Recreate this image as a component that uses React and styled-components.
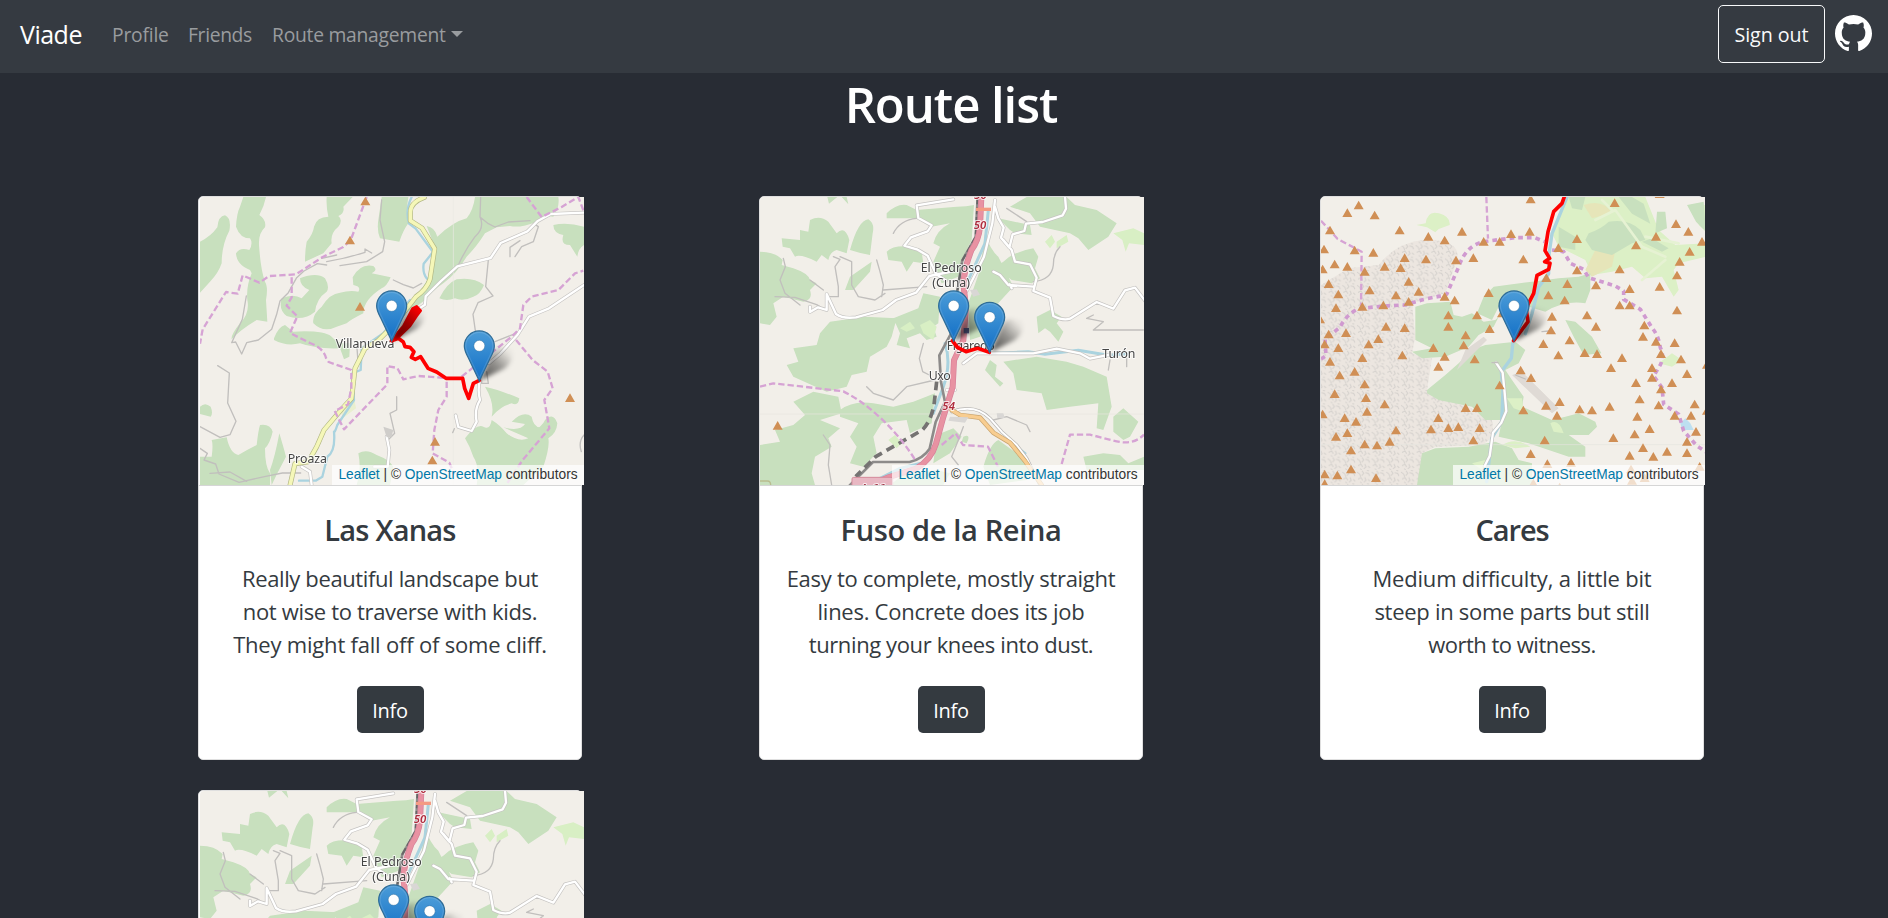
import React from "react";
import styled, { createGlobalStyle } from "styled-components";

const GlobalStyle = createGlobalStyle`
  *, *::before, *::after { box-sizing: border-box; }
  html, body { margin: 0; height: 100%; overflow: hidden; }
  body {
    background: #282c34;
    color: #343a40;
    font-family: "Open Sans", "Noto Sans", sans-serif;
    font-size: 20px;
    line-height: 1.5;
  }
  a { text-decoration: none; }
`;

/* ---------- navigation ---------- */

const Navbar = styled.nav`
  display: flex;
  align-items: center;
  height: 73px;
  padding: 5px 16px 10px 20px;
  background: #353a41;
`;

const Brand = styled.a`
  margin-right: 20px;
  padding-top: 1px;
  width: 72px;
  color: #fff;
  font-size: 25px;
  letter-spacing: -0.5px;
`;

const NavLinks = styled.div`
  display: flex;
  gap: 20px;
  padding-top: 2px;
`;

const NavLink = styled.a`
  display: flex;
  align-items: center;
  width: ${({ $width }) => $width}px;
  color: #999c9f;
  font-size: 19.3px;
  white-space: nowrap;
  letter-spacing: ${({ $spacing }) => $spacing || 0}px;
`;

const Caret = styled.span`
  margin: -3px 0 0 5px;
  border-top: 6px solid currentColor;
  border-left: 6px solid transparent;
  border-right: 6px solid transparent;
`;

const SignOut = styled.button`
  width: 107px;
  height: 58px;
  margin: 0 10px 0 auto;
  padding: 2px 0 0;
  border: 1px solid #f8f9fa;
  border-radius: 5px;
  background: transparent;
  color: #f8f9fa;
  font: inherit;
  font-size: 19.7px;
  letter-spacing: -0.05px;
`;

const GithubMark = styled.svg`
  width: 37px;
  height: 37px;
  margin-top: -1px;
  fill: #fff;
`;

/* ---------- page and cards ---------- */

const Heading = styled.h1`
  height: 123px;
  margin: 0;
  padding: 1px 0 0 14px;
  color: #fff;
  font-size: 49px;
  font-weight: 600;
  line-height: 60px;
  text-align: center;
  letter-spacing: -1.05px;
`;

const RouteGrid = styled.main`
  display: grid;
  grid-template-columns: repeat(3, 384px);
  gap: 30px 177px;
  padding-left: 198px;
`;

const Card = styled.article`
  height: 564px;
  border: 1px solid #dfdfdf;
  border-radius: 5px;
  background: #fff;
`;

const MapFrame = styled.div`
  display: grid;
  width: 384px;
  height: 288px;
  margin-left: ${({ $inset }) => $inset}px;
  border-top-left-radius: 4px;
  overflow: hidden;
`;

const MapCanvas = styled.svg`
  grid-area: 1 / 1;
  width: 384px;
  height: 288px;
`;

const Attribution = styled.div`
  grid-area: 1 / 1;
  place-self: end;
  z-index: 1;
  width: 252px;
  height: 20px;
  background: rgba(255, 255, 255, 0.7);
  color: #333;
  font: 13.75px/19px "Liberation Sans", Arial, sans-serif;
  text-align: center;
  white-space: nowrap;
  a { color: #0078a8; }
`;

const CardBody = styled.div`
  display: flex;
  flex-direction: column;
  align-items: center;
  padding-top: 26px;
  border-top: 1px solid #d6d6d6;
`;

const Title = styled.h2`
  margin: 0 0 14px;
  font-size: 29px;
  font-weight: 600;
  line-height: 36px;
  letter-spacing: ${({ $spacing }) => $spacing}px;
`;

const Description = styled.p`
  margin: 0 0 25px;
  font-size: 22px;
  line-height: 33px;
  text-align: center;
  white-space: nowrap;
`;

const Line = styled.span`
  display: block;
  letter-spacing: ${({ $spacing }) => $spacing}px;
`;

const InfoButton = styled.button`
  width: 67px;
  height: 47px;
  padding: 3px 0 0;
  border: 0;
  border-radius: 5px;
  background: #343a40;
  color: #fff;
  font: inherit;
  letter-spacing: -0.3px;
`;

/* ---------- map drawing ---------- */

const Wood = styled.path`fill: ${({ $tone }) => $tone || "#c8e0be"};`;

const Stroke = styled.path`
  fill: none;
  stroke: ${({ $color }) => $color};
  stroke-width: ${({ $w }) => $w};
  stroke-linejoin: round;
  stroke-linecap: ${({ $dash }) => ($dash ? "butt" : "round")};
  stroke-dasharray: ${({ $dash }) => $dash || "none"};
`;

const PlaceName = styled.text`
  font-family: "Noto Sans", "Open Sans", sans-serif;
  font-size: ${({ $size }) => $size || 37}px;
  font-style: ${({ $italic }) => ($italic ? "italic" : "normal")};
  font-weight: ${({ $italic }) => ($italic ? 600 : 400)};
  fill: ${({ $color }) => $color || "#444"};
  stroke: rgba(255, 255, 255, 0.75);
  stroke-width: 6px;
  stroke-linejoin: round;
  paint-order: stroke;
`;

const Cased = ({ d, w, color, casing }) => (
  <>
    <Stroke d={d} $color={casing} $w={w + 4} />
    <Stroke d={d} $color={color} $w={w} />
  </>
);

const WhiteRoad = ({ d, w = 7 }) => <Cased d={d} w={w} color="#fff" casing="#c6c4c2" />;
const Track = ({ d }) => <Stroke d={d} $color="#c1bfbd" $w={4} />;
const Stream = ({ d, w = 7 }) => <Stroke d={d} $color="#aad3df" $w={w} />;
const Border = ({ d }) => <Stroke d={d} $color="#d6a3d4" $w={7} $dash="19 9" />;
const Trail = ({ d }) => <Stroke d={d} $color="#ff0000" $w={11} />;

const Peaks = ({ points }) => (
  <path
    fill="#d08f55"
    d={points.map(([x, y]) => `M${x} ${y - 14}l15 26h-30z`).join("")}
  />
);

const PIN =
  "M12.5.5C5.9.5.5 5.9.5 12.5c0 3.4 1.4 6 3 9.1l9 18.9 9-18.9c1.6-3.1 3-5.7 3-9.1C24.5 5.9 19.1.5 12.5.5z";

const MapDefs = ({ id }) => (
  <defs>
    <linearGradient id={`${id}-pin`} x1="0" y1="0" x2="0" y2="1">
      <stop offset="0" stopColor="#4b9cd8" />
      <stop offset="1" stopColor="#126fc6" />
    </linearGradient>
    <linearGradient id={`${id}-shade`} x1="0" y1="1" x2="1" y2="0">
      <stop offset="0" stopColor="#000" stopOpacity=".7" />
      <stop offset=".5" stopColor="#000" stopOpacity=".38" />
      <stop offset=".85" stopColor="#000" stopOpacity=".04" />
    </linearGradient>
    <filter id={`${id}-blur`} x="-40%" y="-40%" width="180%" height="180%">
      <feGaussianBlur stdDeviation="6" />
    </filter>
    <filter id={`${id}-soft`} x="-5%" y="-5%" width="110%" height="110%">
      <feGaussianBlur stdDeviation="0.8" />
    </filter>
    <pattern id={`${id}-scree`} width="44" height="40" patternUnits="userSpaceOnUse">
      <path
        d="M3 6l8 6 3 9M18 2l5 8-6 7M28 8l9 2 4 8M6 27l9-4 5 8M26 22l4 9-7 6M36 28l6 6M12 36l5 3M33 1l6 2"
        fill="none" stroke="#d3d0cc" strokeWidth="3"
      />
    </pattern>
  </defs>
);

const PinShadow = ({ id, x, y }) => (
  <path
    filter={`url(#${id}-blur)`}
    fill={`url(#${id}-shade)`}
    d={`M${x + 3} ${y}L${x + 38} ${y - 85}Q${x + 60} ${y - 110} ${x + 95} ${y - 92}Q${x + 110} ${y - 62} ${x + 75} ${y - 35}L${x + 3} ${y}z`}
  />
);

const Pin = ({ id, x, y }) => (
  <g transform={`translate(${x - 46.9} ${y - 152}) scale(3.75)`}>
    <path d={PIN} fill={`url(#${id}-pin)`} stroke="#2e6c97" strokeWidth="1" />
    <path d="M12.5 1.6C6.5 1.6 1.6 6.5 1.6 12.5c0 3 1.3 5.6 2.8 8.6l8.1 17 8.1-17c1.5-3 2.8-5.6 2.8-8.6 0-6-4.9-10.9-10.9-10.9z" fill="none" stroke="#fff" strokeOpacity=".12" />
    <circle cx="12.5" cy="12.4" r="4.4" fill="#fff" stroke="#2e6c97" strokeOpacity=".6" strokeWidth=".6" />
  </g>
);

const XanasMap = ({ id }) => (
  <MapCanvas viewBox="30 21 1152 864">
    <MapDefs id={id} />
    <rect x="30" y="21" width="1152" height="864" fill="#f2efe9" />
    <g filter={`url(#${id}-soft)`}>
      <Wood d="M30 155Q62 140 82 112Q85 78 105 76Q125 85 118 122Q95 165 95 220Q85 250 60 275L30 308z
        M160 21L228 21Q222 50 208 75Q230 90 225 112Q205 130 207 165Q212 240 225 275Q235 290 228 330L232 395L200 390Q150 420 125 448Q122 435 150 400Q180 370 172 330Q168 290 185 250L180 240Q140 225 138 190Q150 170 178 180Q190 160 180 145Q150 145 138 110Q140 70 150 50z
        M410 21L488 21L460 50Q465 70 445 78Q460 90 445 110Q420 130 425 160L400 190L345 215Q345 180 350 155Q370 130 372 110Q380 80 415 80Q408 50 410 21z
        M575 21L655 21Q648 60 655 100Q640 120 628 155L570 145Q560 120 565 90z
        M710 108Q735 112 742 140Q790 95 830 85Q850 60 855 21L1105 21Q1110 50 1090 80Q1060 75 1040 95Q990 115 960 108L920 112L885 130Q860 170 830 200Q800 250 760 280Q730 300 705 330L660 365L650 345Q690 310 712 270L738 180z
        M1090 105Q1130 95 1182 110L1182 165Q1165 175 1162 200L1140 165Q1110 165 1120 135Q1090 130 1090 105z
        M748 325Q770 280 800 268Q850 260 882 285Q870 315 850 320Q820 335 795 325Q770 335 748 325z
        M488 262Q510 220 550 228Q565 240 545 250L602 262Q590 290 575 295Q520 330 520 370Q480 390 470 400L440 410Q400 430 370 400Q365 375 395 350Q420 310 450 308Q480 300 505 305Q515 290 490 285z
        M330 265Q380 245 405 265Q420 290 410 305Q380 325 375 365Q340 395 290 378Q265 360 275 325Q310 310 335 325L358 300Q330 290 330 265z
        M252 445Q265 410 285 405L310 425Q400 420 425 440Q440 460 480 460L478 500L462 508L450 475Q380 478 330 460Q290 470 252 450z
        M30 800L65 800Q70 765 65 750L110 742Q120 790 145 795Q170 780 200 765Q205 720 210 705Q240 700 248 725Q240 760 225 775Q225 830 240 850L240 885L30 885z
        M30 650Q45 635 62 650Q70 670 62 680L30 672z
        M268 730Q280 770 288 800L262 850L245 885L240 840Q255 800 268 730z
        M505 790Q530 775 560 795Q600 810 610 830L600 885L500 885Q515 840 505 790z
        M885 590Q930 600 988 625Q985 650 965 640Q930 650 905 680Q915 640 885 590z
        M825 745Q860 700 880 710Q900 722 905 690Q930 705 950 730Q985 758 1015 745L940 712Q990 725 1005 702L965 695Q1000 660 1025 680Q1030 710 1050 712L1020 735Q1060 705 1065 690Q1090 665 1102 700Q1100 730 1075 745Q1080 770 1060 830L1000 885L860 885Q870 830 850 800Q840 770 825 745z" />
      <Wood $tone="#e9efcf" d="M490 610l8 45-40 30-8-30z" />
      <Stroke d="M790 21V885" $color="#ece9e4" $w={2} />
      <Track d="M575 30l-5 60 14 65-6 30-48 30-80 12M410 215q60-10 115-28l0-10 20 12M395 205l45-10M410 225l-28-4-40 22-22 20-25 45-25 25-10 40-15 45-40 32-35 8-15 34-18-36-12 2 32-70 12-70" />
      <Track d="M30 775l22 15-10 20 35 12 10 30 60 25 80-18 50-10 55 0M30 710l60 32 30-8 18-40-25-55 5-90-35-22M60 850l60-4 50 28M620 620l0 40-20 10 14 60-20 20" />
      <Track d="M872 21l-2 60 25 20 20 10 40-15 65-4M870 80q15 35-15 60-30 40-50 85M895 210l-8 80 22 28-45 20-15 35 10 70-8 60M610 270l30 14 30 10 25-14M1030 100l15 10-15 45-35 15-20 30M960 200v-28l30-20M1182 735q-18 20-8 50M500 460l4 55" />
      <Stream d="M665 21q-20 40-8 80l20 15 52 70-28 35q-4 30 10 45M660 330l-80 100-65 45-3 65-25 10 5 80-50 75q-8 25-10 20 5 60-20 75l-15 60-20 12h-50" />
      <WhiteRoad d="M1182 68l-100 4-40 22-30 30-80 35-30 45-100 25-50 45-45 45-2 25-15 10M1182 285l-60 40-45 30-60 25-35 55-50 55-35 30M335 830l25 15 5 40M870 570q-8 30 0 60-18 30-10 65l-15 28-40-12-8-35M590 740l8 40-5 50-40 0" w={7} />
      <Track d="M915 455l55-22M890 545l5 35h-20v-28M788 728l5-12" />
      <path d="M580 710l30 10-6 22h-14z" fill="#cfcdca" />
      <Cased d="M703 22q-42 15-42 45v25l35 22 38 62-14 92q-10 30-42 52l-60 78-55 55-38 22-30 60-10 90-28 30-55 65-22 50-25 45-40 6-15 65" w={11} color="#f5f7b8" casing="#b3b884" />
      <Border d="M530 21l-48 130-22 20-62 30-80 52-80 5-30 20-50-22-15 55-35-5-70 112-8 43M305 262v60l-15 25 32 32-22 50 60 30q40 15 48 45l8 12 68 24v55l-10 48-40 20 28 55 130-135v-55l30 6 18 34 45-10 85 6M770 575v45l-25 40-12 60-5 70 50 28 15 35M815 560l150-120 25-25 10-70 25-25 80-20 50-50 25-8M978 450l50 60 45 35 15 50-25 35 15 85-80 95-60 90M1010 21l45 60 60-30 50-30 17 45" />
      <Peaks points={[[526, 34], [480, 151], [510, 350], [735, 755], [727, 811], [1140, 624]]} />
      <PlaceName x="437" y="474" textLength="176">Villanueva</PlaceName>
      <PlaceName x="293" y="819" textLength="118">Proaza</PlaceName>
    </g>
    <path d="M603 452L640 408L668 355L680 349L692 362L680 378L660 408L625 442z" fill="#f00" stroke="#f00" strokeWidth="8" strokeLinejoin="round" />
    <Trail d="M605 452L625 445L640 456L645 470L660 472L672 485L664 502L676 508L692 500L714 535L740 546L768 565L818 565L824 595L836 625L850 580L868 571" />
    <PinShadow id={id} x={605} y={452} />
    <PinShadow id={id} x={868} y={571} />
    <Pin id={id} x={605} y={453} />
    <Pin id={id} x={868} y={573} />
  </MapCanvas>
);

const FusoMap = ({ id }) => (
  <MapCanvas viewBox="30 21 1152 864">
    <MapDefs id={id} />
    <rect x="30" y="21" width="1152" height="864" fill="#f2efe9" />
    <g filter={`url(#${id}-soft)`}>
      <Wood d="M232 21h30l-25 20zM275 21l20 22-5-22z
        M95 145L150 150L150 120L175 125L180 90Q210 75 235 95L260 130Q285 105 298 150L290 190L260 180Q240 185 235 210L215 195L200 215Q150 190 135 200L120 175L98 170z
        M300 180Q325 90 355 88Q375 100 368 130L360 195Q330 190 300 180z
        M410 70Q440 40 470 45L500 60L620 50Q650 50 672 45L665 150L640 200L625 260L575 280L550 215L570 170L550 160Q560 120 600 100L545 110L500 85L410 85z
        M410 185Q430 165 480 170L515 185L520 220L490 215L470 245L455 215L415 210z
        M30 185Q75 185 98 210L95 225L130 235Q175 250 180 270L200 280L180 300Q190 330 160 335L100 320L70 340L80 380L60 405L30 400z
        M300 260L365 215L360 245L310 300L285 300z
        M830 21L950 21L975 45L1040 60L1100 100L1075 140L1015 180L985 145L960 130L870 110L840 70L780 50z
        M705 130Q720 180 745 200L790 290L735 350L690 440L660 450L655 340L690 240z
        M745 85L840 105L845 135L795 130L780 120z
        M760 215Q790 185 850 175L865 200L855 235L870 265L845 280L785 270L735 230z
        M110 525L145 515L130 475L200 465L210 430L240 395L345 380L440 385L425 440L410 470L360 500L350 545L305 555L290 590L230 605L130 560z
        M430 385L505 355L520 310L570 320L565 400L550 410L560 440L530 450L510 430L470 445L480 475L440 465L450 430z
        M130 635L190 605L265 620L275 670L210 690L270 715L235 745L245 770L195 800L185 850L195 885L110 885L90 850L30 840L30 765L90 755L75 720L130 705L165 675z
        M270 660Q310 630 370 640L430 650L490 635L555 610L545 700L480 730L470 690L395 700L370 740L380 790L340 830L300 820L320 770L300 740L325 700L270 680z
        M30 840l60-10 70 55H30z
        M560 735L610 715L635 740L600 790L550 820zM640 740Q665 730 650 760L635 755z
        M705 540L720 510L740 525L735 560L760 580L750 590z
        M760 515L860 500L950 515L1000 530L1070 560L1085 650L1060 720L1040 715L1045 640L960 650L890 660L875 610L800 600L790 550z
        M860 380L900 360L935 380L920 400L940 425L925 455L900 425L885 415L865 430z
        M1090 680L1120 655L1165 695L1140 740L1120 750L1090 725z
        M1000 800L1060 790L1110 795L1135 820L1182 800L1182 840L1010 840z
        M700 830Q720 760 745 750L800 790L850 840L830 870L720 885z
        M420 885L465 850L560 840L600 850L580 885z" />
      <Wood $tone="#d8efc4" d="M885 155l20-20 10 20-15 20zM920 155l30-20 5 20-35 20zM1090 130l60-15 32 15v35l-45-5-10 25-10-35zM510 405l30-15 20 20-10 40-30-20zM450 415l30-20 15 20-25 10zM415 750l20-15 20 25-15 15z" />
      <Stroke d="M30 672H1182" $color="#e9e6e0" $w={2} />
      <Track d="M100 205l6 25-16 40 15 40 45 35M75 320l60 2 65 22 10 6M250 200l20 8-15 22 10 60 0 30-30 0M270 200l35 15 0 70 20 35 50 10 30-20M380 210l10 35 10 40-5 35M430 130q20-40 70-45M400 300l130-10M180 270l40 30M520 460l-12 45 10 40 20 10M350 590l20 20 60 20 40-40 85-20M220 735l20 30-5 60 10 60M930 170q-20 20-20 55-5 45-60 50M770 55l60 40M1030 375l-20 10 50 10-30 25 150 0M640 710l-15 40-20 50 20 25M730 690l40-10 60 25 10 20M1080 510l-5 30M1130 505l0 25" />
      <Stream d="M715 60l-10 100-50 110M585 460q20 60-5 130l-30 80M735 490l100-5 50 8 100-12 90 15 55-5M390 865l60-30 60-15M785 760l40 30" w={9} />
      <WhiteRoad d="M180 350l0 16 24-14 26 8 0-48 28 60q20 15 60 10l80-22 40-30 60-22 40-50 60-12M610 28l-110 18 5 38 40 22-12 18-50 18-20 25 40 12 30 18 25 55 30 20M735 30l-8 70-25 100-50 100-35 40 0 90M735 50l10 35 16 28-8 30 25 30 10-40 35-10 5-22 50-5 60-20 10-20-5-60M760 150l25 30 10 35 45 8 20 40-10 40 50 20 10 55q30 15 50 8l80-50 50 20 35-55 30-8 32 42M730 245l20 10 25 30 75 5M785 295l-6-12M640 520l40-30 170 0 70-14 70 14 30 16 60-12M590 600l25 0" w={7} />
      <Cased d="M605 665q70-25 115 20l35 40 45 40 30 40 40 80" w={6} color="#fff" casing="#b7b5b3" />
      <Stroke d="M683 21l-6 120-40 70-18 110-16 110-35 65 5 80 12 60-28 60-18 80q-20 30-60 40l-110 0-70 70" $color="#8d8b8a" $w={8} />
      <Stroke d="M683 21l-6 120-40 70-18 110" $color="#666" $w={6} $dash="22 8" />
      <Stroke d="M560 575l-8 70q-10 50-35 75-70 40-140 80l-60 60" $color="#747372" $w={11} $dash="26 16" />
      <Cased d="M605 660l25 15 60 8 40 45 50 30 45 55 50 72" w={10} color="#f8cd90" casing="#c9a36d" />
      <Cased d="M694 21l-4 90q-4 40-26 70-20 50-24 100l8 70-8 100-28 60-4 80-28 90-22 80q-15 50-60 75l-80 25-60 25" w={14} color="#e892a2" casing="#d7809a" />
      <path d="M660 300l20-2 10 16-20 6zM600 680l55 2-10 16-50-6zM740 670l20 0 4 14h-22z" fill="#d9d7d5" />
      <path d="M678 53h45v10h-45z" fill="#f49b83" />
      <path d="M641 414h16v16h-16z" fill="#585c8c" />
      <Border d="M30 590l40-10 90 10 120 14q50 25 95 65 70 60 120 140M575 765l42-35 22 35 75 5 30 60M935 822l25-88 60 0 80 20q50 12 82-20" />
      <Peaks points={[[83, 707]]} />
      <rect x="306" y="862" width="122" height="30" rx="5" fill="#e8b8c3" stroke="#d68b9b" strokeWidth="3" />
      <path d="M30 873h22q10 0 10 12" fill="none" stroke="#b9bd90" strokeWidth="4" />
      <PlaceName x="332" y="907" $size={32} $color="#a33446" $italic textLength="72">A-66</PlaceName>
      <PlaceName x="672" y="28" $size={34} $color="#ae2c3c" $italic textLength="38">50</PlaceName>
      <PlaceName x="671" y="118" $size={34} $color="#ae2c3c" $italic textLength="38">50</PlaceName>
      <PlaceName x="577" y="659" $size={34} $color="#ae2c3c" $italic textLength="38">54</PlaceName>
      <PlaceName x="512" y="245" textLength="183">El Pedroso</PlaceName>
      <PlaceName x="547" y="292" textLength="113">(Cuna)</PlaceName>
      <PlaceName x="590" y="481" textLength="144">Figaredo</PlaceName>
      <PlaceName x="536" y="569" textLength="66">Uxo</PlaceName>
      <PlaceName x="1057" y="504" textLength="99">Turón</PlaceName>
    </g>
    <Trail d="M607 452L622 472L648 485L683 475L718 487" />
    <PinShadow id={id} x={611} y={452} />
    <PinShadow id={id} x={719} y={486} />
    <Pin id={id} x={611} y={453} />
    <Pin id={id} x={719} y={487} />
  </MapCanvas>
);

const CARES_PEAKS = [
  [140, 46], [106, 69], [188, 76], [54, 121], [263, 121], [349, 140], [398, 151], [450, 125], [515, 155],
  [563, 155], [597, 132], [653, 125], [656, 28], [908, 39], [1043, 12], [36, 178], [128, 181], [184, 188],
  [278, 204], [342, 208], [432, 211], [484, 204], [634, 208], [739, 174], [795, 147], [972, 166], [1032, 140],
  [1092, 102], [1129, 125], [1170, 155], [1133, 185], [1103, 215], [68, 223], [106, 230], [32, 238], [158, 245],
  [218, 230], [266, 234], [290, 275], [50, 282], [173, 301], [79, 313], [252, 316], [320, 305], [398, 320],
  [428, 331], [530, 309], [703, 264], [766, 282], [795, 241], [852, 286], [923, 238], [1095, 256], [953, 297],
  [1043, 290], [709, 316], [758, 331], [72, 354], [151, 350], [214, 346], [290, 335], [923, 346], [953, 346],
  [1095, 361], [409, 376], [495, 376], [570, 370], [720, 380], [825, 376], [24, 388], [222, 410], [278, 414],
  [409, 410], [533, 417], [717, 421], [852, 410], [997, 406], [50, 433], [102, 429], [461, 436], [199, 447],
  [773, 451], [993, 440], [1032, 455], [1088, 459], [38, 463], [170, 463], [455, 466], [694, 462], [79, 474],
  [364, 474], [271, 496], [398, 500], [488, 508], [739, 496], [818, 489], [855, 492], [1047, 492], [1107, 508],
  [151, 504], [54, 515], [930, 504], [379, 530], [897, 534], [1020, 534], [626, 541], [128, 545], [83, 556],
  [1125, 552], [1185, 524], [657, 564], [1020, 563], [563, 586], [972, 579], [1080, 579], [158, 583], [1047, 598],
  [68, 612], [162, 624], [983, 628], [743, 636], [218, 643], [1148, 643], [702, 647], [1040, 646], [461, 654],
  [495, 654], [634, 661], [803, 658], [840, 661], [893, 650], [165, 665], [1185, 662], [32, 673], [98, 684],
  [379, 684], [735, 677], [976, 680], [1088, 677], [1137, 677], [132, 695], [357, 718], [409, 714], [439, 711],
  [503, 714], [252, 721], [1013, 717], [1152, 725], [106, 729], [968, 733], [72, 740], [904, 744], [484, 751],
  [698, 751], [233, 755], [1125, 755], [158, 763], [195, 766], [993, 774], [117, 781], [1065, 785], [656, 792],
  [953, 797], [1024, 800], [1125, 789], [706, 822], [777, 818], [117, 838], [1163, 830], [38, 853], [76, 856],
  [192, 864], [38, 882], [957, 838], [664, 880], [960, 872], [998, 864], [743, 892],
];

const CaresMap = ({ id }) => {
  const ridge =
    "M27 507l15-10-3-50 45-35q20-40 55-55 70-10 140-12 60-20 110-27l15-5 35-80q25-75 90-80l80-10 60 0 28 12M720 180l35 5 20 35 40 18 15 25 80 25 25 15 0 25 50 30 35 55q20 25 25 60 15 30-5 60l-15 25 25 35 5 50 45 30 15 50 40 45 30 20";
  const scree =
    "M27 285L110 235L200 225Q250 160 330 150Q450 145 435 210L400 310L300 340L310 440L300 490L360 505L345 600L450 640L540 690L545 740L510 765L370 770L330 790L330 885L27 885z";
  return (
    <MapCanvas viewBox="27 21 1152 864">
      <MapDefs id={id} />
      <rect x="27" y="21" width="1152" height="864" fill="#f2efe9" />
      <g filter={`url(#${id}-soft)`}>
        <path d={scree} fill="#ece6e0" />
        <path d={scree} fill={`url(#${id}-scree)`} />
        <Wood $tone="#dcf0c6" d="M313 105l28-5q5-40 40-30 35 10 32 35l-33 12-10 10-25-15z
          M770 21L1000 21L1040 120L1090 165L1182 160L1182 200L1100 220L1085 240L1100 300L1085 320L1050 260L1000 265L960 230L900 245L840 255L820 210L740 170L720 130Q735 70 770 21z
          M1170 45l12 0 0 80-22-20zM1040 520l40-30 30 20-30 20z" />
        <path d="M815 45q60-20 85 25l-60 15zM850 180l60 0-10 50-60 30-20-20z" fill="#e6e5b9" />
        <Wood d="M830 130Q870 115 890 95Q950 85 985 120L1000 150L960 160L900 195L840 180L820 150z
          M770 21L820 21L810 60L780 55zM960 21l35 20 20 60-55-30-40-50zM1035 65l25 0 5 50-35 15zM1125 45l50-10 7 90-30-30zM990 155l60 30 20-10-50-30zM740 110l50 30 0 40-50-10z
          M545 290L660 275L740 265L800 260L835 250L835 300L820 340Q760 330 700 365L650 350L600 380L560 350L540 390L495 370L515 320z
          M310 350L345 340L415 335L425 375L450 380L480 370L515 395L550 390L560 380L545 410L500 435L470 470L400 500L330 505L300 485L360 475L310 450z
          M345 600L400 555L440 520L480 480L520 465L610 455L640 480L620 520L580 540L600 570L635 620L630 650L720 690L760 680L800 670L850 695L855 710L830 735L770 735L820 770L820 800L770 800L650 760L560 740L570 690L520 690L480 650L380 630L345 610z
          M330 790L370 775L470 770L550 755L600 775L620 810L660 820L660 885L315 885z
          M760 390L790 395L840 440L868 490L815 495L785 440z" />
        <Wood $tone="#dcf0c6" d="M585 625l45 0 5 40-30-10zM570 765q40-25 85 5l-45 5zM715 700q25-15 40 30l-30-5zM480 820l40-10-10 30z" />
        <path d="M600 555l30-10 110 110-20 15zM460 480l55-40 10 10-90 90z" fill="#dfdad5" />
        <path d="M1105 700l15-15 15 15 10 20-35 0z" fill="#bddff0" />
        <Stroke d="M27 764H1182" $color="#e4e4de" $w={2} />
        <Stroke d="M850 90l60-30 80 110 70 30M900 60l-30-30M1060 210l-70 60M1000 140l100 20" $color="#e6f2d3" $w={8} />
        <Track d="M690 425l20-2M610 555l30 12" />
        <Stream d="M765 21l-45 110-10 70 0 50-30 40-20 80-20 60M603 455l-5 50-30 40 5 60-4 90-30 50-15 130" w={10} />
        <WhiteRoad d="M552 518l20 30 6 60 5 55-15 35-25 30-10 70-15 30" w={7} />
        <Track d="M540 518h18" />
        <Border d="M27 92l50 55 72 38-2 165M523 21l5 125" />
        <Stroke d={ridge} $color="#d09ad0" $w={11} $dash="14 12" />
        <Peaks points={CARES_PEAKS} />
      </g>
      <Trail d="M757 20L750 40L725 65L708 125L699 182L713 205L698 215L714 220L710 238L675 256L665 310L642 355L648 395L605 452" />
      <PinShadow id={id} x={605} y={452} />
      <Pin id={id} x={606} y={453} />
    </MapCanvas>
  );
};

/* ---------- data ---------- */

const FUSO = {
  name: "Fuso de la Reina",
  spacing: -0.35,
  Map: FusoMap,
  lines: [
    ["Easy to complete, mostly straight", -0.29],
    ["lines. Concrete does its job", -0.27],
    ["turning your knees into dust.", -0.39],
  ],
};

const ROUTES = [
  {
    id: "xanas",
    inset: 1,
    name: "Las Xanas",
    spacing: -0.8,
    Map: XanasMap,
    lines: [
      ["Really beautiful landscape but", -0.38],
      ["not wise to traverse with kids.", -0.33],
      ["They might fall off of some cliff.", -0.2],
    ],
  },
  { id: "fuso", inset: 0, ...FUSO },
  {
    id: "cares",
    inset: 0,
    name: "Cares",
    spacing: -1.1,
    Map: CaresMap,
    lines: [
      ["Medium difficulty, a little bit", -0.2],
      ["steep in some parts but still", -0.28],
      ["worth to witness.", -0.5],
    ],
  },
  { id: "fuso-again", inset: 1, ...FUSO },
];

const RouteCard = ({ route }) => {
  const { Map } = route;
  return (
    <Card>
      <MapFrame $inset={route.inset}>
        <Map id={route.id} />
        <Attribution>
          <a href="#leaflet">Leaflet</a> | © <a href="#osm">OpenStreetMap</a> contributors
        </Attribution>
      </MapFrame>
      <CardBody>
        <Title $spacing={route.spacing}>{route.name}</Title>
        <Description>
          {route.lines.map(([text, spacing]) => (
            <Line key={text} $spacing={spacing}>{text}</Line>
          ))}
        </Description>
        <InfoButton>Info</InfoButton>
      </CardBody>
    </Card>
  );
};

export default function App() {
  return (
    <>
      <GlobalStyle />
      <Navbar>
        <Brand href="#home">Viade</Brand>
        <NavLinks>
          <NavLink href="#profile" $width={56} $spacing={-0.2}>Profile</NavLink>
          <NavLink href="#friends" $width={64} $spacing={-0.35}>Friends</NavLink>
          <NavLink href="#routes" $width={192} $spacing={-0.26}>
            Route management
            <Caret />
          </NavLink>
        </NavLinks>
        <SignOut>Sign out</SignOut>
        <GithubMark viewBox="0 0 16 16">
          <path d="M8 0C3.58 0 0 3.58 0 8c0 3.54 2.29 6.53 5.47 7.59.4.07.55-.17.55-.38 0-.19-.01-.82-.01-1.49-2.01.37-2.53-.49-2.69-.94-.09-.23-.48-.94-.82-1.13-.28-.15-.68-.52-.01-.53.63-.01 1.08.58 1.23.82.72 1.21 1.87.87 2.33.66.07-.52.28-.87.51-1.07-1.78-.2-3.64-.89-3.64-3.95 0-.87.31-1.59.82-2.15-.08-.2-.36-1.02.08-2.12 0 0 .67-.21 2.2.82.64-.18 1.32-.27 2-.27s1.36.09 2 .27c1.53-1.04 2.2-.82 2.2-.82.44 1.1.16 1.92.08 2.12.51.56.82 1.27.82 2.15 0 3.07-1.87 3.75-3.65 3.95.29.25.54.73.54 1.48 0 1.07-.01 1.93-.01 2.2 0 .21.15.46.55.38A8.01 8.01 0 0 0 16 8c0-4.42-3.58-8-8-8z" />
        </GithubMark>
      </Navbar>
      <Heading>Route list</Heading>
      <RouteGrid>
        {ROUTES.map((route) => (
          <RouteCard key={route.id} route={route} />
        ))}
      </RouteGrid>
    </>
  );
}
